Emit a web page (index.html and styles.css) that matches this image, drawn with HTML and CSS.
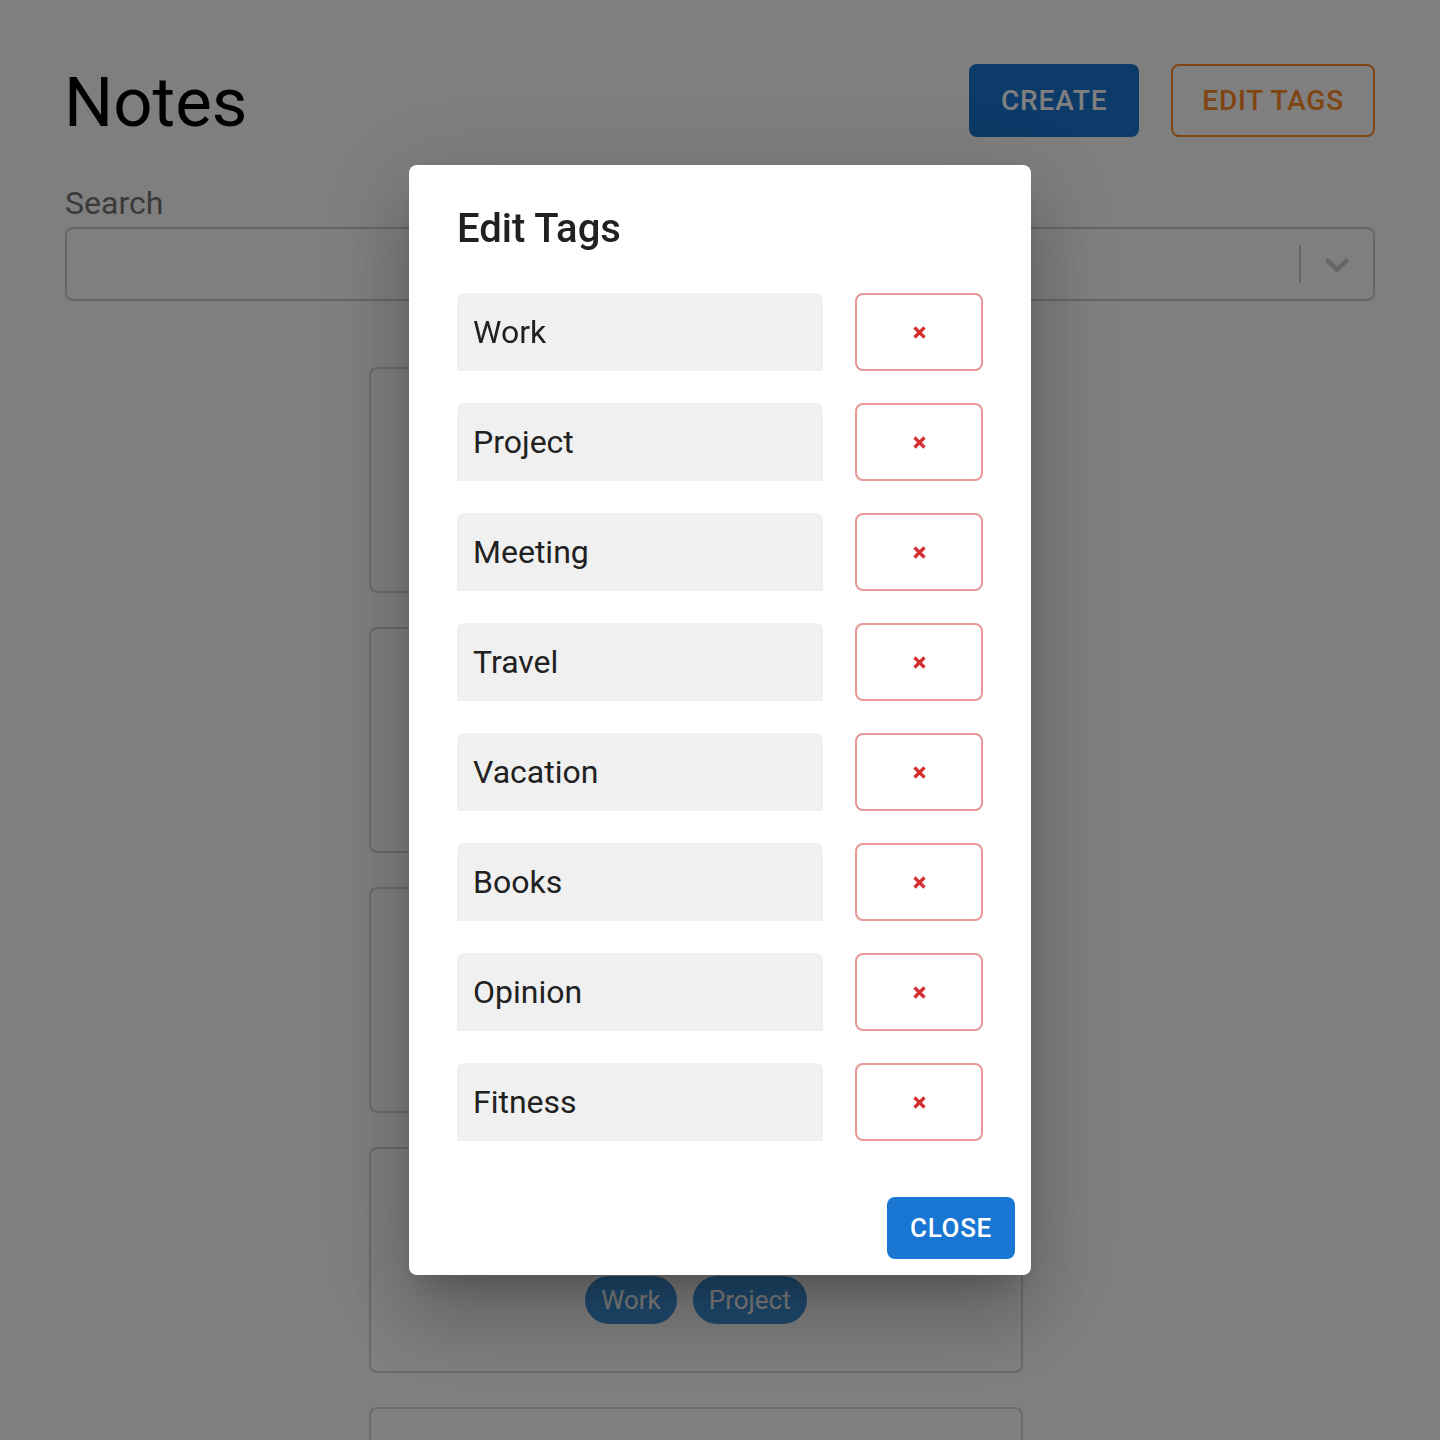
FILE: index.html
```html
<!DOCTYPE html>
<html lang="en">
<head>
<meta charset="utf-8">
<title>Notes</title>
<link rel="stylesheet" href="styles.css">
</head>
<body>
<div class="page">
  <header class="header">
    <h1 class="title">Notes</h1>
    <div class="actions">
      <button class="btn btn-primary">CREATE</button>
      <button class="btn btn-outline">EDIT TAGS</button>
    </div>
  </header>

  <div class="search">
    <label class="search-label">Search</label>
    <div class="select-control">
      <span class="select-sep"></span>
      <span class="select-indicator">
        <svg width="40" height="40" viewBox="0 0 20 20"><path fill="#ccc" d="M4.516 7.548c0.436-0.446 1.043-0.481 1.576 0l3.908 3.747 3.908-3.747c0.533-0.481 1.141-0.446 1.574 0 0.436 0.445 0.408 1.197 0 1.615-0.406 0.418-4.695 4.502-4.695 4.502-0.217 0.223-0.502 0.335-0.787 0.335s-0.57-0.112-0.789-0.335c0 0-4.287-4.084-4.695-4.502s-0.436-1.170 0-1.615z"/></svg>
      </span>
    </div>
  </div>

  <div class="notes">
    <div class="card"></div>
    <div class="card"></div>
    <div class="card"></div>
    <div class="card card-tags">
      <span class="chip">Work</span>
      <span class="chip">Project</span>
    </div>
    <div class="card"></div>
  </div>
</div>

<div class="backdrop">
  <div class="dialog">
    <h2 class="dialog-title">Edit Tags</h2>
    <div class="dialog-content">
      <div class="row"><div class="tag-input">Work</div><button class="del-btn"><svg width="13" height="13" viewBox="0 0 13 13"><path d="M1.5 1.5L11.5 11.5M11.5 1.5L1.5 11.5" stroke="#d32f2f" stroke-width="3.2"/></svg></button></div>
      <div class="row"><div class="tag-input">Project</div><button class="del-btn"><svg width="13" height="13" viewBox="0 0 13 13"><path d="M1.5 1.5L11.5 11.5M11.5 1.5L1.5 11.5" stroke="#d32f2f" stroke-width="3.2"/></svg></button></div>
      <div class="row"><div class="tag-input">Meeting</div><button class="del-btn"><svg width="13" height="13" viewBox="0 0 13 13"><path d="M1.5 1.5L11.5 11.5M11.5 1.5L1.5 11.5" stroke="#d32f2f" stroke-width="3.2"/></svg></button></div>
      <div class="row"><div class="tag-input">Travel</div><button class="del-btn"><svg width="13" height="13" viewBox="0 0 13 13"><path d="M1.5 1.5L11.5 11.5M11.5 1.5L1.5 11.5" stroke="#d32f2f" stroke-width="3.2"/></svg></button></div>
      <div class="row"><div class="tag-input">Vacation</div><button class="del-btn"><svg width="13" height="13" viewBox="0 0 13 13"><path d="M1.5 1.5L11.5 11.5M11.5 1.5L1.5 11.5" stroke="#d32f2f" stroke-width="3.2"/></svg></button></div>
      <div class="row"><div class="tag-input">Books</div><button class="del-btn"><svg width="13" height="13" viewBox="0 0 13 13"><path d="M1.5 1.5L11.5 11.5M11.5 1.5L1.5 11.5" stroke="#d32f2f" stroke-width="3.2"/></svg></button></div>
      <div class="row"><div class="tag-input">Opinion</div><button class="del-btn"><svg width="13" height="13" viewBox="0 0 13 13"><path d="M1.5 1.5L11.5 11.5M11.5 1.5L1.5 11.5" stroke="#d32f2f" stroke-width="3.2"/></svg></button></div>
      <div class="row"><div class="tag-input">Fitness</div><button class="del-btn"><svg width="13" height="13" viewBox="0 0 13 13"><path d="M1.5 1.5L11.5 11.5M11.5 1.5L1.5 11.5" stroke="#d32f2f" stroke-width="3.2"/></svg></button></div>
    </div>
    <div class="dialog-actions">
      <button class="close-btn">CLOSE</button>
    </div>
  </div>
</div>
</body>
</html>
```

FILE: styles.css
```css
* { box-sizing: border-box; }

html, body {
  margin: 0;
  padding: 0;
  background: #ffffff;
  font-family: Roboto, "Liberation Sans", Arial, sans-serif;
}

.page {
  padding: 64px 65px 0;
}

.header {
  display: flex;
  justify-content: space-between;
  align-items: flex-start;
  height: 73px;
}

.title {
  margin: -2px 0 0 -1px;
  font-size: 69px;
  line-height: 82px;
  font-weight: 400;
  color: #000;
}

.actions {
  display: flex;
  gap: 32px;
}

.btn {
  height: 73px;
  padding: 0 32px;
  font-family: Roboto, "Liberation Sans", Arial, sans-serif;
  font-size: 28px;
  font-weight: 500;
  letter-spacing: 0.8px;
  border-radius: 8px;
  cursor: pointer;
}

.btn-primary {
  background: #1976d2;
  color: #fff;
  border: none;
}

.btn-outline {
  background: transparent;
  color: #ff8a26;
  border: 2px solid #ff8a26;
  padding: 0 29px;
}

.search {
  margin-top: 47px;
  display: flex;
  flex-direction: column;
}

.search-label {
  font-size: 32px;
  line-height: 38px;
  color: #757575;
  margin-bottom: 5px;
}

.select-control {
  height: 74px;
  border: 2px solid #cccccc;
  border-radius: 8px;
  background: #fff;
  display: flex;
  justify-content: flex-end;
  align-items: stretch;
}

.select-sep {
  width: 2px;
  background: #cccccc;
  margin: 16px 0;
}

.select-indicator {
  display: flex;
  align-items: center;
  padding: 0 16px;
}

.notes {
  margin: 66px 0 0 304px;
  width: 654px;
  display: flex;
  flex-direction: column;
  gap: 34px;
  padding-bottom: 40px;
}

.card {
  height: 226px;
  border: 2px solid #d6d6d6;
  border-radius: 8px;
  background: #fff;
}

.card-tags {
  display: flex;
  justify-content: center;
  align-items: flex-end;
  gap: 16px;
  padding-bottom: 47px;
}

.chip {
  height: 48px;
  border-radius: 24px;
  background: #3d94dc;
  color: #fff;
  font-size: 26px;
  line-height: 48px;
  padding: 0 16px;
}

.backdrop {
  position: fixed;
  inset: 0;
  background: rgba(0, 0, 0, 0.5);
  display: flex;
  align-items: center;
  justify-content: center;
}

.dialog {
  width: 622px;
  background: #fff;
  border-radius: 8px;
  box-shadow: 0 22px 30px -14px rgba(0,0,0,0.2), 0 48px 76px 6px rgba(0,0,0,0.14), 0 18px 92px 16px rgba(0,0,0,0.12);
}

.dialog-title {
  margin: 0;
  padding: 32px 48px;
  font-size: 40px;
  line-height: 64px;
  font-weight: 500;
  color: #212121;
}

.dialog-content {
  padding: 0 48px 40px;
  display: flex;
  flex-direction: column;
  gap: 32px;
}

.row {
  display: flex;
  gap: 32px;
}

.tag-input {
  width: 366px;
  height: 78px;
  background: #f0f0f0;
  border-radius: 7px 7px 0 0;
  padding: 0 16px;
  font-size: 32px;
  line-height: 78px;
  color: #212121;
}

.del-btn {
  width: 128px;
  height: 78px;
  border: 2px solid #e99797;
  border-radius: 8px;
  background: #fff;
  display: flex;
  align-items: center;
  justify-content: center;
  padding: 0;
  cursor: pointer;
}

.dialog-actions {
  padding: 16px;
  display: flex;
  justify-content: flex-end;
}

.close-btn {
  height: 62px;
  padding: 0 23px;
  background: #1976d2;
  color: #fff;
  border: none;
  border-radius: 8px;
  font-family: Roboto, "Liberation Sans", Arial, sans-serif;
  font-size: 26px;
  font-weight: 500;
  letter-spacing: 0.7px;
  cursor: pointer;
}
```
